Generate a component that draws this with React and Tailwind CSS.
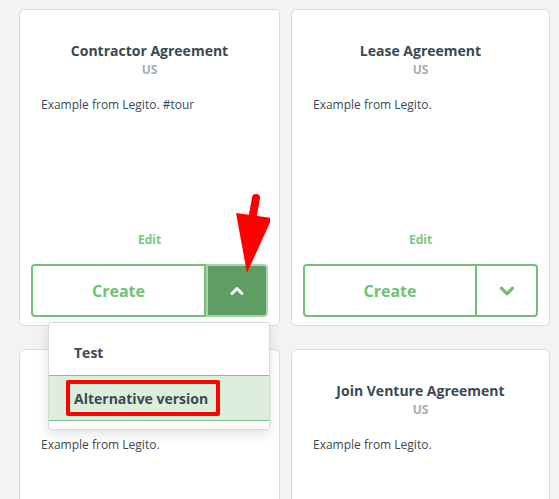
import React from 'react';
import { ChevronUp, ChevronDown } from 'lucide-react';

const font = { fontFamily: '"Open Sans", "Liberation Sans", sans-serif' };

const TemplateCard = ({ title, description, open, children }) => {
    return (
        <div className="relative h-[317px] bg-white border border-[#d9dddd] rounded-[6px] flex flex-col pt-[31px] px-[11px] pb-[8px]">
            <h3 className="text-center text-[14px] font-bold leading-[19px] text-[#3b4852]">{title}</h3>
            <div className="text-center text-[12px] font-bold leading-[16px] text-[#a5abb0] mt-[2px]">US</div>
            <p className="mt-[18px] px-[10px] text-[12px] leading-[17px] text-[#3b4852]">{description}</p>
            <div className="mt-auto text-center text-[12px] font-bold leading-[16px] text-[#7dc480] mb-[16px]">Edit</div>
            <div className="flex h-[53px]">
                <button className="flex-1 border-2 border-[#72c075] rounded-l-[4px] text-[16px] font-bold text-[#72c075] flex items-center justify-center">
                    Create
                </button>
                {open ? (
                    <button className="w-[62px] bg-[#5f9e63] rounded-r-[4px] border-2 border-[#a8d5aa] flex items-center justify-center">
                        <ChevronUp size={20} strokeWidth={3.5} className="text-white" />
                    </button>
                ) : (
                    <button className="w-[61px] border-2 border-l-0 border-[#72c075] rounded-r-[4px] flex items-center justify-center">
                        <ChevronDown size={22} strokeWidth={3.5} className="text-[#72c075]" />
                    </button>
                )}
            </div>
            {children}
        </div>
    );
};

const App = () => {
    return (
        <div className="min-h-screen bg-[#f2f3f3] overflow-hidden" style={font}>
            <div className="grid grid-cols-[261px_259px] gap-x-[11px] gap-y-[23px] pl-[19px] pt-[9px]">
                <div className="relative z-10">
                    <TemplateCard title="Contractor Agreement" description="Example from Legito. #tour" open>
                        {/* Version dropdown */}
                        <div className="absolute left-[28px] top-[312px] w-[222px] bg-white border border-[#d6dadb] rounded-[3px] shadow-[0_4px_12px_rgba(0,0,0,0.12)] pt-[6px] pb-[8px]">
                            <div className="h-[46px] flex items-center pl-[25px] text-[14px] font-bold text-[#3b4852]">Test</div>
                            <div className="h-[46px] flex items-center bg-[#ddefdc] border-y border-[#7cc47f] pl-[17px]">
                                <span className="border-[4px] border-[#ff0000] rounded-[2px] pl-[4px] pr-[8px] h-[36px] flex items-center text-[14px] font-bold text-[#3b4852]">
                                    Alternative version
                                </span>
                            </div>
                        </div>
                        {/* Red arrow */}
                        <svg className="absolute left-[205px] top-[180px]" width="45" height="85" viewBox="0 0 45 85">
                            <path d="M31 8 L27 30" stroke="#ff0000" strokeWidth="8" strokeLinecap="round" />
                            <polygon points="11,23 47,28 22,83" fill="#ff0000" />
                        </svg>
                    </TemplateCard>
                </div>
                <TemplateCard title="Lease Agreement" description="Example from Legito." />
                <TemplateCard title="NDA" description="Example from Legito." />
                <TemplateCard title="Join Venture Agreement" description="Example from Legito." />
            </div>
        </div>
    );
};

export default App;
